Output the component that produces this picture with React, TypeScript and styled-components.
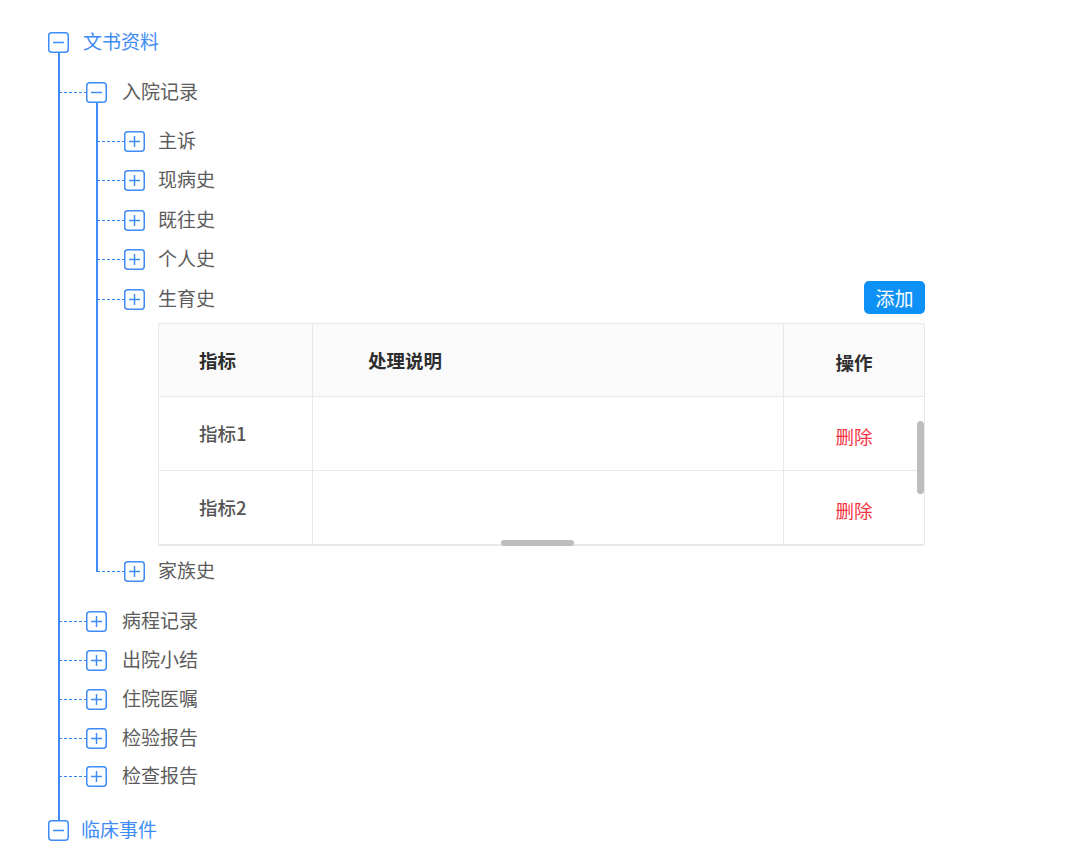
import styled, { createGlobalStyle } from "styled-components";

const GlobalStyle = createGlobalStyle`
  html, body {
    margin: 0;
    padding: 0;
    background: #fff;
  }
  body {
    font-family: "Noto Sans CJK SC", "Noto Sans", sans-serif;
  }
`

const BLUE = "#3f8cf6"

type TreeNode = {
  label: string
  open?: boolean
  table?: boolean
  space?: number
  children?: TreeNode[]
}

const data: TreeNode[] = [
  {
    label: "文书资料",
    open: true,
    children: [
      {
        label: "入院记录",
        open: true,
        children: [
          { label: "主诉" },
          { label: "现病史" },
          { label: "既往史" },
          { label: "个人史" },
          { label: "生育史", table: true },
          { label: "家族史" },
        ],
      },
      { label: "病程记录" },
      { label: "出院小结" },
      { label: "住院医嘱" },
      { label: "检验报告" },
      { label: "检查报告" },
    ],
  },
  { label: "临床事件", open: true, space: 12 },
]

// spacing per depth: space before first, space above each item, space after, line stops at last row
const levels = [
  { padTop: 0, gap: 0, padBottom: 0, toLast: false },
  { padTop: 11.25, gap: 17.75, padBottom: 33, toLast: false },
  { padTop: 9.6, gap: 18.4, padBottom: 11.25, toLast: true },
]

const Page = styled.div`
  padding: 32px 0 0 48px;
  width: 877px;
`

const Branch = styled.ul<{ $padTop: number; $padBottom: number; $toLast: boolean; $nested: boolean }>`
  list-style: none;
  margin: 0 0 0 ${(p) => (p.$nested ? "10.5px" : "0")};
  padding: ${(p) => p.$padTop}px 0 ${(p) => p.$padBottom}px ${(p) => (p.$nested ? "27.5px" : "0")};
  position: relative;

  &::before {
    content: "";
    display: ${(p) => (p.$nested ? "block" : "none")};
    position: absolute;
    left: -1px;
    top: 0;
    bottom: ${(p) => (p.$toLast ? p.$padBottom + 10.5 : 0)}px;
    width: 2px;
    background: ${BLUE};
  }
`

const Item = styled.li<{ $gap: number }>`
  padding-top: ${(p) => p.$gap}px;
`

const Row = styled.div<{ $nested: boolean }>`
  position: relative;
  height: 21px;
  display: flex;
  align-items: center;

  &::before {
    content: "";
    display: ${(p) => (p.$nested ? "block" : "none")};
    position: absolute;
    left: -27px;
    top: 10px;
    width: 27px;
    height: 1px;
    background: repeating-linear-gradient(to right, #2f83f5 0 3px, transparent 3px 5px);
  }
`

const Label = styled.span<{ $root: boolean; $space: number }>`
  margin-left: ${(p) => p.$space}px;
  font-size: 19px;
  line-height: 21px;
  margin-top: -4px;
  color: ${(p) => (p.$root ? BLUE : "#5c5c5c")};
  white-space: nowrap;
`

const AddButton = styled.button`
  margin-left: auto;
  flex: none;
  height: 33px;
  width: 61px;
  border: none;
  border-radius: 5px;
  background: #0e91f6;
  color: #fff;
  font-family: "Noto Sans CJK SC", sans-serif;
  font-size: 19px;
  padding: 0;
  margin-top: -4px;
  cursor: pointer;
`

function Toggle({ open }: { open?: boolean }) {
  return (
    <svg width="21" height="21" viewBox="0 0 21 21" style={{ flex: "none" }}>
      <rect x="0.75" y="0.75" width="19.5" height="19.5" rx="3" fill="#fff" stroke={BLUE} strokeWidth="1.5" />
      <line x1="5" y1="10.5" x2="16" y2="10.5" stroke={BLUE} strokeWidth="1.5" />
      {!open && <line x1="10.5" y1="5" x2="10.5" y2="16" stroke={BLUE} strokeWidth="1.5" />}
    </svg>
  )
}

const TableWrap = styled.div`
  position: relative;
  margin: 13.4px 1px -3px 34px;
  border: 1px solid #e8e8e8;
  border-right: none;
`

const Grid = styled.div`
  display: grid;
  grid-template-columns: 154px 471px 141px;
`

const Cell = styled.div<{ $head?: boolean; $center?: boolean; $pad?: number; $shift?: number }>`
  height: ${(p) => (p.$head ? 73 : 74)}px;
  box-sizing: border-box;
  display: flex;
  align-items: center;
  justify-content: ${(p) => (p.$center ? "center" : "flex-start")};
  padding-left: ${(p) => p.$pad ?? 0}px;
  padding-top: ${(p) => p.$shift ?? 0}px;
  background: ${(p) => (p.$head ? "#fafafa" : "#fff")};
  border-right: 1px solid #e8e8e8;
  border-bottom: 1px solid #e8e8e8;
  font-size: 18.5px;
  font-weight: ${(p) => (p.$head ? 700 : 500)};
  color: ${(p) => (p.$head ? "#2e2e2e" : "#555")};
`

const Danger = styled.span`
  color: #f5333f;
  font-weight: 400;
`

const ScrollY = styled.div`
  position: absolute;
  right: 0;
  top: 97px;
  width: 7px;
  height: 73px;
  border-radius: 4px;
  background: #bdbdbd;
`

const ScrollX = styled.div`
  position: absolute;
  left: 342px;
  bottom: -1px;
  height: 6px;
  width: 73px;
  border-radius: 3px;
  background: #bdbdbd;
`

function IndexTable() {
  const rows = ["指标1", "指标2"]
  return (
    <TableWrap>
      <Grid>
        <Cell $head $pad={40}>指标</Cell>
        <Cell $head $pad={55}>处理说明</Cell>
        <Cell $head $center $shift={5}>操作</Cell>
        {rows.flatMap((r) => [
          <Cell key={r + "a"} $pad={40}>{r}</Cell>,
          <Cell key={r + "b"} />,
          <Cell key={r + "c"} $center $shift={6}>
            <Danger>删除</Danger>
          </Cell>,
        ])}
      </Grid>
      <ScrollY />
      <ScrollX />
    </TableWrap>
  )
}

const labelSpace = [14, 15, 13]

function Tree({ nodes, depth }: { nodes: TreeNode[]; depth: number }) {
  const lv = levels[depth]
  return (
    <Branch $padTop={lv.padTop} $padBottom={lv.padBottom} $toLast={lv.toLast} $nested={depth > 0}>
      {nodes.map((n) => (
        <Item key={n.label} $gap={lv.gap}>
          <Row $nested={depth > 0}>
            <Toggle open={n.open} />
            <Label $root={depth === 0} $space={n.space ?? labelSpace[depth]}>{n.label}</Label>
            {n.table && <AddButton>添加</AddButton>}
          </Row>
          {n.table && <IndexTable />}
          {n.open && n.children && <Tree nodes={n.children} depth={depth + 1} />}
        </Item>
      ))}
    </Branch>
  )
}

export default function App() {
  return (
    <>
      <GlobalStyle />
      <Page>
        <Tree nodes={data} depth={0} />
      </Page>
    </>
  )
}
